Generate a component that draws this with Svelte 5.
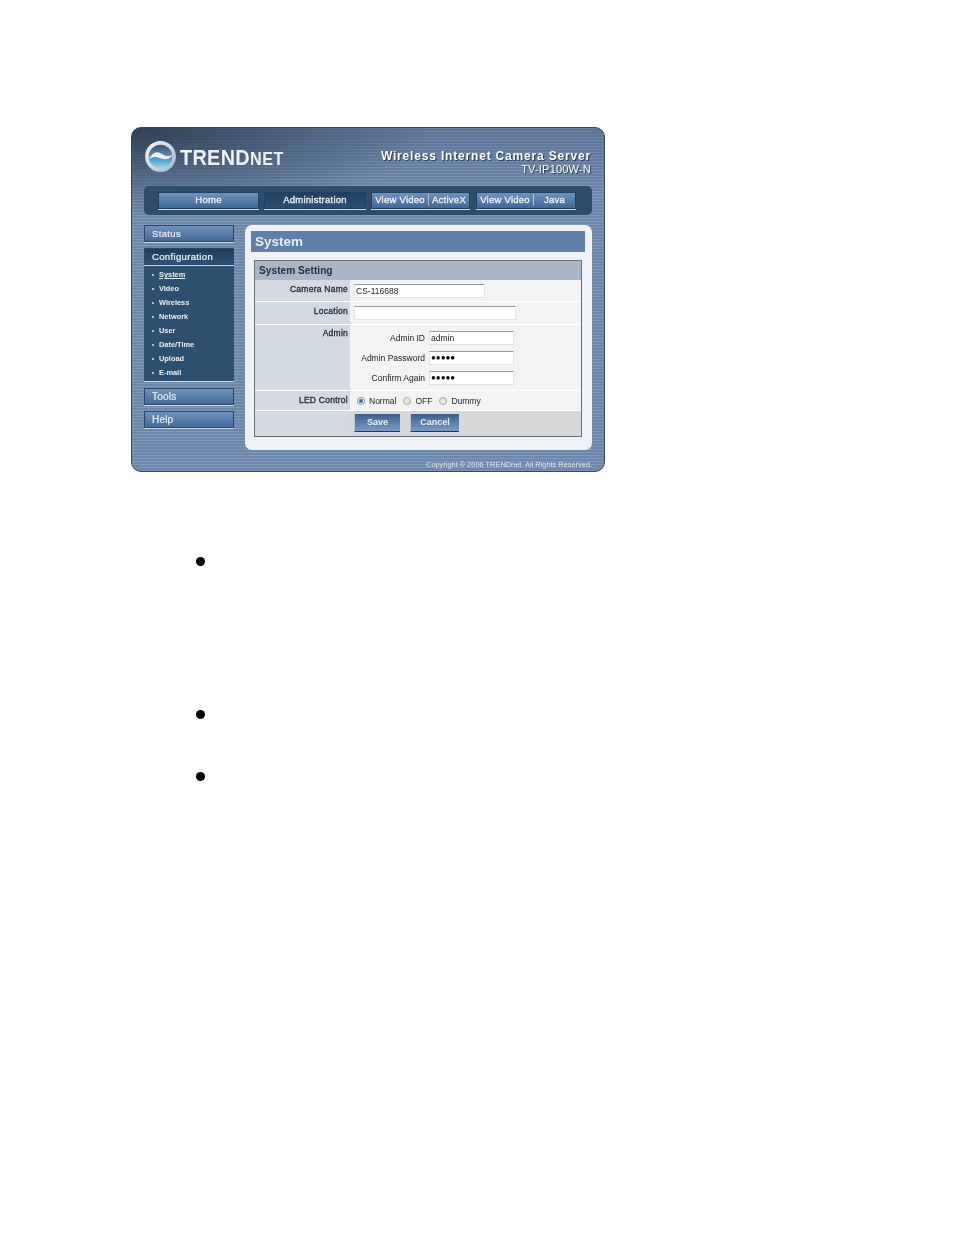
<script>
  const sideLinks = ["System", "Video", "Wireless", "Network", "User", "Date/Time", "Upload", "E-mail"];
  const ledModes = ["Normal", "OFF", "Dummy"];
  const admins = [
    { label: "Admin ID", value: "admin" },
    { label: "Admin Password", value: "●●●●●", dots: true },
    { label: "Confirm Again", value: "●●●●●", dots: true }
  ];
</script>

<div class="page">
  <div class="frame">
    <header class="top">
      <div class="logo">
        <svg width="33" height="33" viewBox="0 0 33 33">
          <defs>
            <linearGradient id="ball" x1="0" y1="0" x2="0" y2="1">
              <stop offset="0" stop-color="#2f4a68" />
              <stop offset="0.45" stop-color="#5f84a8" />
              <stop offset="0.62" stop-color="#4aa4cf" />
              <stop offset="1" stop-color="#a8e0f2" />
            </linearGradient>
            <linearGradient id="ring" x1="0" y1="0" x2="1" y2="1">
              <stop offset="0" stop-color="#f2f5f8" />
              <stop offset="1" stop-color="#a9b6c6" />
            </linearGradient>
          </defs>
          <circle cx="16.5" cy="16.5" r="13.6" fill="url(#ball)" stroke="url(#ring)" stroke-width="3.6" />
          <path d="M4.500 19.500C8 13 12 10.500 17 13.500s8 3.500 12 1c-2.500 4-7 6-12 4s-8-2.500-12.500 1z" fill="#eef3f7" />
        </svg>
        <span class="brand">TREND<small>NET</small></span>
      </div>
      <div class="product">
        <div class="product-name">Wireless Internet Camera Server</div>
        <div class="model">TV-IP100W-N</div>
      </div>
    </header>

    <nav class="nav">
      <span class="btn home">Home</span>
      <span class="btn active admin">Administration</span>
      <span class="btn split one"><span>View Video</span><span>ActiveX</span></span>
      <span class="btn split two"><span>View Video</span><span>Java</span></span>
    </nav>

    <div class="main">
      <aside class="side">
        <div class="side-btn">Status</div>
        <div class="side-group">
          <div class="side-btn current">Configuration</div>
          <ul class="sub">
            {#each sideLinks as link, i}
              <li class:on={i === 0}>{link}</li>
            {/each}
          </ul>
        </div>
        <div class="side-btn big">Tools</div>
        <div class="side-btn big">Help</div>
      </aside>

      <section class="panel">
        <h1>System</h1>
        <div class="box">
          <h2>System Setting</h2>
          <div class="row r-name">
            <div class="lbl">Camera Name</div>
            <div class="val"><span class="input w-name">CS-116688</span></div>
          </div>
          <div class="row r-loc">
            <div class="lbl">Location</div>
            <div class="val"><span class="input w-loc"></span></div>
          </div>
          <div class="row r-admin">
            <div class="lbl">Admin</div>
            <div class="val admin-fields">
              {#each admins as a}
                <div class="field">
                  <span class="field-lbl">{a.label}</span>
                  <span class="input w-admin" class:dots={a.dots}>{a.value}</span>
                </div>
              {/each}
            </div>
          </div>
          <div class="row r-led">
            <div class="lbl">LED Control</div>
            <div class="val radios">
              {#each ledModes as m, i}
                <span class="radio" class:sel={i === 0}></span><span class="radio-lbl">{m}</span>
              {/each}
            </div>
          </div>
          <div class="row r-act">
            <div class="lbl"></div>
            <div class="val acts">
              <span class="act save">Save</span>
              <span class="act">Cancel</span>
            </div>
          </div>
        </div>
      </section>
    </div>

    <footer class="copy">Copyright © 2006 TRENDnet. All Rights Reserved.</footer>
  </div>

  <ul class="bullets">
    <li class="b1"></li>
    <li class="b2"></li>
    <li class="b3"></li>
  </ul>
</div>

<style>
  :global(body) {
    background: #fff;
  }
  .page {
    box-sizing: border-box;
    width: 954px;
    height: 1235px;
    padding: 127px 0 0 131px;
    font-family: "Liberation Sans", Arial, sans-serif;
    overflow: hidden;
  }
  .frame {
    box-sizing: border-box;
    width: 474px;
    height: 345px;
    border: 1px solid #33465c;
    border-radius: 10px;
    padding: 0 12px;
    display: flex;
    flex-direction: column;
    background:
      radial-gradient(ellipse 300px 90px at 0 0, rgba(38, 54, 74, 0.85) 0%, rgba(50, 70, 95, 0.45) 55%, rgba(90, 120, 160, 0) 100%),
      linear-gradient(180deg, rgba(60, 82, 110, 0.35) 0, rgba(60, 82, 110, 0) 66px),
      repeating-linear-gradient(180deg, #8199b8 0 1px, #6c87aa 1px 3px);
    filter: blur(0.35px);
  }
  .top {
    height: 58px;
    display: flex;
    justify-content: space-between;
    flex: none;
  }
  .logo {
    display: flex;
    align-items: center;
    gap: 3px;
    margin-top: 3px;
    height: 50px;
  }
  .brand {
    font-weight: 700;
    font-size: 22px;
    display: inline-block;
    width: 104px;
    white-space: nowrap;
    letter-spacing: 0.4px;
    transform: scaleX(0.9);
    transform-origin: left;
    color: #eef2f6;
    margin-top: 3px;
  }
  .brand small {
    font-size: 18px;
    letter-spacing: 0.6px;
  }
  .product {
    text-align: right;
    color: #fff;
    padding: 22px 1px 0 0;
    font-weight: 700;
    text-shadow: 1px 1px 1px #24364a;
  }
  .product-name {
    font-size: 12px;
    letter-spacing: 0.82px;
    line-height: 13px;
  }
  .model {
    font-size: 11px;
    letter-spacing: 0.2px;
    font-weight: 400;
    line-height: 13px;
  }
  .nav {
    flex: none;
    height: 29px;
    width: 448px;
    box-sizing: border-box;
    border-radius: 5px;
    background: #2f4c6b;
    display: flex;
    align-items: center;
    padding: 0 0 0 14px;
    gap: 5px;
  }
  .btn {
    box-sizing: border-box;
    height: 17px;
    padding-bottom: 2px;
    display: flex;
    align-items: center;
    justify-content: center;
    color: #f2f5f8;
    font-size: 9.5px;
    letter-spacing: 0.25px;
    -webkit-text-stroke: 0.3px #f2f5f8;
    background: linear-gradient(180deg, #6f92bd, #3f6798);
    border: 1px solid #22405f;
    box-shadow: 0 1px 0 #cfdbe8;
  }
  .active {
    background: linear-gradient(180deg, #21405f, #2b4f73);
  }
  .home { width: 101px; }
  .admin { width: 102px; }
  .one { width: 99px; }
  .two { width: 100px; margin-left: 1px; }
  .split span {
    flex: 1 1 auto;
    text-align: center;
    line-height: 12px;
  }
  .split span:first-child {
    border-right: 1px solid #aebfd2;
  }
  .one span:first-child { width: 56px; flex: none; }
  .two span:first-child { width: 56px; flex: none; }
  .main {
    flex: none;
    margin-top: 10px;
    display: flex;
    gap: 11px;
  }
  .side {
    width: 90px;
    flex: none;
    display: flex;
    flex-direction: column;
  }
  .side-btn {
    box-sizing: border-box;
    height: 17px;
    line-height: 16px;
    padding-left: 7px;
    font-size: 9.5px;
    letter-spacing: 0.35px;
    color: #e6edf4;
    -webkit-text-stroke: 0.2px #e6edf4;
    background: linear-gradient(180deg, #7191ba, #43699a);
    border: 1px solid #2a4866;
    box-shadow: 0 1px 0 #cfdbe8;
  }
  .side-group {
    margin-top: 6px;
    background: #2f4f6f;
    box-shadow: 0 1px 0 #cfdbe8;
    height: 133px;
  }
  .current {
    background: linear-gradient(180deg, #1f3c5a, #2f5273);
    color: #fff;
  }
  .big {
    margin-top: 7px;
    font-size: 10px;
    letter-spacing: 0.2px;
  }
  .big + .big { margin-top: 6px; }
  .sub {
    list-style: none;
    margin: 0;
    padding: 3px 0 0 15px;
  }
  .sub li {
    height: 14px;
    line-height: 14px;
    font-size: 7.4px;
    font-weight: 700;
    color: #e8eef4;
    position: relative;
  }
  .sub li::before {
    content: "";
    position: absolute;
    left: -7px;
    top: 6px;
    width: 2px;
    height: 2px;
    border-radius: 50%;
    background: #dfe7f0;
  }
  .sub li.on { text-decoration: underline; }
  .panel {
    box-sizing: border-box;
    width: 347px;
    height: 225px;
    background: #eef1f5;
    border-radius: 7px;
    padding: 6px 7px 0 6px;
  }
  h1 {
    margin: 0;
    height: 21px;
    line-height: 21px;
    font-size: 13.5px;
    font-weight: 700;
    color: #e9eef4;
    padding-left: 4px;
    background: #5f7ea8;
  }
  .box {
    box-sizing: border-box;
    margin: 8px 0 0 3px;
    width: 328px;
    height: 177px;
    border: 1px solid #6e6e6e;
    background: #fff;
  }
  h2 {
    margin: 0;
    height: 19px;
    line-height: 19px;
    font-size: 10.2px;
    font-weight: 700;
    color: #23303e;
    padding-left: 4px;
    background: #a9b6c5;
  }
  .row {
    display: flex;
    border-bottom: 1px solid #fff;
    box-sizing: border-box;
  }
  .lbl {
    box-sizing: border-box;
    width: 95px;
    flex: none;
    background: #d3dae3;
    color: #1f2a36;
    font-size: 8.5px;
    letter-spacing: 0.25px;
    -webkit-text-stroke: 0.3px #1f2a36;
    text-align: right;
    padding: 4px 2px 0 0;
  }
  .r-admin .lbl { padding-top: 3px; }
  .val {
    flex: 1;
    background: #f3f3f3;
    display: flex;
    align-items: flex-start;
    padding-left: 4px;
    box-sizing: border-box;
  }
  .r-name { height: 22px; }
  .r-loc { height: 23px; }
  .r-admin { height: 66px; }
  .r-led { height: 20px; }
  .r-act { height: 25px; border-bottom: 0; }
  .r-act .val { background: #d8d8d8; padding-top: 3px; }
  .input {
    box-sizing: border-box;
    display: block;
    height: 14px;
    line-height: 13px;
    background: #fff;
    border: 1px solid #e3e3e3;
    border-top-color: #9a9a9a;
    font-size: 8.5px;
    color: #222;
    padding-left: 1px;
  }
  .w-name { width: 131px; margin-top: 4px; }
  .w-loc { width: 162px; margin-top: 4px; }
  .w-admin { width: 85px; height: 14px; }
  .dots {
    font-size: 8px;
    line-height: 12px;
    color: #000;
  }
  .admin-fields {
    flex-direction: column;
    padding: 6px 0 0 0;
    gap: 6px;
  }
  .field {
    display: flex;
    align-items: center;
    width: 164px;
    justify-content: flex-end;
    gap: 4px;
    color: #222;
    font-size: 8.5px;
  }
  .radios {
    align-items: center;
    padding-left: 7px;
    font-size: 8.5px;
    color: #222;
  }
  .radio {
    box-sizing: border-box;
    width: 8px;
    height: 8px;
    border-radius: 50%;
    border: 1px solid #a8a8a8;
    background: #e6e6e6;
  }
  .radio.sel {
    background: #2f6ea8;
    box-shadow: inset 0 0 0 1px #fff;
  }
  .radio-lbl {
    margin: 0 7px 0 4px;
  }
  .acts {
    gap: 10px;
  }
  .act {
    box-sizing: border-box;
    display: block;
    height: 18px;
    width: 46px;
    line-height: 17px;
    text-align: center;
    color: #e8eef4;
    font-size: 9px;
    font-weight: 700;
    background: linear-gradient(180deg, #3b5f8e, #7a9cc6);
    border-left: 1px solid #b8c8da;
    border-bottom: 1px solid #1d3a5c;
  }
  .act + .act { width: 49px; }
  .copy {
    margin-top: 10px;
    text-align: right;
    font-size: 7.4px;
    color: #dfe6ee;
  }
  .bullets {
    list-style: none;
    margin: 0;
    padding: 0 0 0 65px;
    display: flex;
    flex-direction: column;
  }
  .bullets li {
    width: 9px;
    height: 9px;
    border-radius: 50%;
    background: #000;
  }
  .b1 { margin-top: 85px; }
  .b2 { margin-top: 144px; }
  .b3 { margin-top: 53px; }
</style>
